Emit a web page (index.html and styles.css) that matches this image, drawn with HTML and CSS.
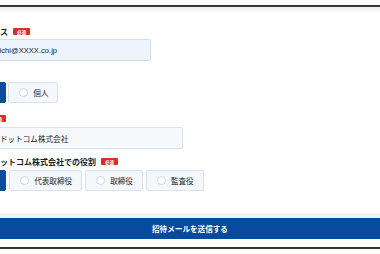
FILE: index.html
```html
<!DOCTYPE html>
<html lang="ja">
<head>
    <meta charset="UTF-8">
    <meta name="viewport" content="width=device-width, initial-scale=1.0">
    <title>メンバー招待</title>
    <link rel="stylesheet" href="styles.css">
</head>
<body>

    <div class="top-rule"></div>
    <div class="top-shade"></div>

    <form class="invite-form">
        <div class="field field-mail">
            <div class="field-label">メールアドレス<span class="req">必須</span></div>
            <input type="text" class="text-input is-filled" value="yamamoto.ichi@XXXX.co.jp">
        </div>

        <div class="field field-type">
            <div class="field-label">区分<span class="req">必須</span></div>
            <div class="choice-group">
                <label class="choice is-checked"><span class="dot"></span>法人</label>
                <label class="choice"><span class="dot"></span>個人</label>
            </div>
        </div>

        <div class="field field-company">
            <div class="field-label">会社名称<span class="req">必須</span></div>
            <input type="text" class="text-input" value="ＸＸＸＸＸドットコム株式会社">
        </div>

        <div class="field field-role">
            <div class="field-label">ＸＸＸＸＸドットコム株式会社での役割<span class="req">必須</span></div>
            <div class="choice-group">
                <label class="choice is-checked"><span class="dot"></span>社員</label>
                <label class="choice"><span class="dot"></span>代表取締役</label>
                <label class="choice"><span class="dot"></span>取締役</label>
                <label class="choice"><span class="dot"></span>監査役</label>
            </div>
        </div>
    </form>

    <div class="submit-area">
        <button type="button" class="submit-btn">招待メールを送信する</button>
    </div>

    <div class="bottom-rule"></div>

</body>
</html>
```

FILE: styles.css
```css
 * {
     box-sizing: border-box;
     margin: 0;
     padding: 0;
     font-family: "Liberation Sans", "Noto Sans CJK JP", sans-serif;
 }

 body {
     width: 380px;
     height: 254px;
     overflow: hidden;
     background-color: #fff;
     color: #222;
 }

 .top-rule {
     margin-top: 5px;
     height: 2px;
     background-color: #3d3431;
 }

 .top-shade {
     height: 7px;
     background: linear-gradient(#efefef, #fff);
 }

 .invite-form {
     margin-left: -48px;
     padding-top: 12px;
 }

 .field-mail { margin-top: 0; }
 .field-type { margin-top: 7px; }
 .field-company { margin-top: 10px; }
 .field-role { margin-top: 7px; }

 .field-label {
     display: flex;
     align-items: center;
     height: 11px;
     margin-bottom: 2px;
     font-size: 8px;
     font-weight: bold;
     white-space: nowrap;
     color: #1d1d1d;
 }

 .req {
     display: inline-flex;
     align-items: center;
     justify-content: center;
     width: 17px;
     height: 7px;
     margin-left: 5px;
     font-size: 4.5px;
     font-weight: bold;
     color: #fff;
     background-color: #d3302a; /* required badge */
     border-radius: 1px;
 }

 .text-input {
     display: block;
     height: 22px;
     padding: 0 9px;
     font-size: 7.6px;
     color: #222;
     background-color: #f7f9fc;
     border: 1px solid #dbe3ee;
     border-radius: 2px;
     outline: none;
 }

 .field-mail .text-input {
     width: 199px;
 }

 .text-input.is-filled {
     background-color: #edf4fc;
     border-color: #cfdff2;
 }

 .field-company .text-input {
     width: 231px;
 }

 .field-type .field-label,
 .field-company .field-label,
 .field-role .field-label {
     margin-bottom: 3px;
 }

 .choice-group {
     display: flex;
     gap: 2px;
     margin-left: 4px;
 }

 .field-role .choice-group {
     gap: 3px;
 }

 .choice {
     display: flex;
     align-items: center;
     gap: 5px;
     height: 21px;
     padding: 0 9px 0 10px;
     font-size: 7.6px;
     color: #2a2a2a;
     white-space: nowrap;
     background-color: #f4f7fb;
     border: 1px solid #d9e3ef;
     border-radius: 2px;
 }

 .dot {
     width: 9px;
     height: 9px;
     border-radius: 50%;
     background-color: #fff;
     border: 1px solid #cfd6df;
 }

 .choice.is-checked {
     color: #fff;
     background-color: #0a4c9e;
     border-color: #0a4c9e;
 }

 .choice.is-checked .dot {
     border: 2px solid #fff;
     background-color: #0a4c9e;
 }

 .submit-area {
     margin-top: 22px;
     border-top: 5px solid #f1f1f1;
 }

 .submit-btn {
     display: block;
     width: 100%;
     height: 21px;
     font-size: 7.6px;
     font-weight: bold;
     color: #fff;
     background-color: #074b9d;
     border: none;
     cursor: pointer;
 }

 .bottom-rule {
     margin-top: 8px;
     height: 2px;
     background-color: #3d3431;
 }
```
